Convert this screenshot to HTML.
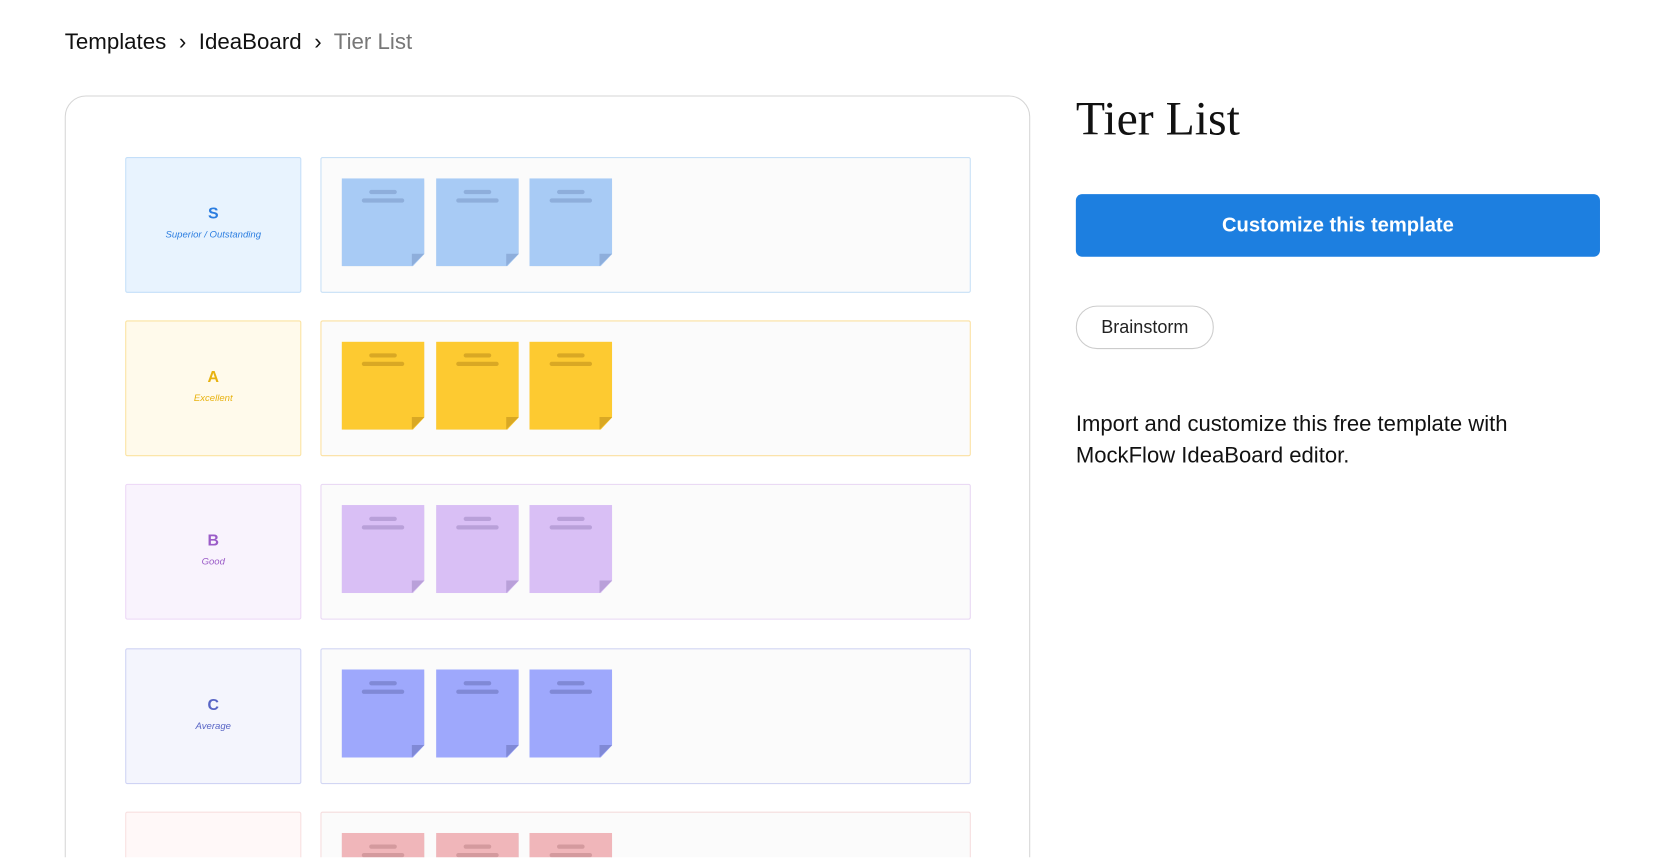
<!DOCTYPE html>
<html><head><meta charset="utf-8"><style>
html,body{margin:0;padding:0;background:#fff;overflow:hidden;width:1664px;height:858px}
#w{position:absolute;left:0;top:0;width:1568px;height:808px;overflow:hidden;transform:scale(1.061);transform-origin:0 0;font-family:"Liberation Sans",sans-serif;color:#111}
.a{position:absolute}
.bc{top:28px;font-size:21px;white-space:nowrap}
.card{left:61px;top:90px;width:908px;height:760px;border:1px solid #d6d6d6;border-radius:20px;overflow:hidden;background:#fff}
.lab{position:absolute;left:56px;width:164px;height:126px;border:1px solid;border-radius:2px;text-align:center}
.lab b{display:block;margin-top:44px;font-size:15px;font-weight:bold}
.lab i{display:block;margin-top:6px;font-size:9px}
.box{position:absolute;left:240px;width:611px;height:126px;border:1px solid;border-radius:2px;background:#fbfbfb}
.n{position:absolute;width:78px;height:83px;box-shadow:1px 3px 4px rgba(0,0,0,.15);clip-path:polygon(0 0,100% 0,100% 86%,86% 100%,0 100%)}
.n:before{content:"";position:absolute;left:26px;top:11px;width:26px;height:4px;border-radius:2px;background:var(--l)}
.n:after{content:"";position:absolute;left:19px;top:19px;width:40px;height:4px;border-radius:2px;background:var(--l)}
.f{position:absolute;left:66px;top:71px;width:12px;height:12px;background:var(--l);clip-path:polygon(100% 0,0 100%,0 0)}
</style></head><body><div id="w">
<div class="a bc" style="left:61px">Templates <span style="margin:0 6px">›</span> IdeaBoard <span style="margin:0 6px">›</span> <span style="color:#777">Tier List</span></div>
<div class="a card">
<div style="position:absolute;left:0;top:57px">
<div class="lab" style="top:0;background:#e8f3fe;border-color:#c4dff9;color:#2b7de0"><b>S</b><i>Superior / Outstanding</i></div>
<div class="box" style="top:0;border-color:#c8e0f6"></div>
<div class="lab" style="top:154px;background:#fffaeb;border-color:#fbe3a0;color:#e8b20f"><b>A</b><i>Excellent</i></div>
<div class="box" style="top:154px;border-color:#fbe0a0"></div>
<div class="lab" style="top:308px;background:#f9f3fd;border-color:#ecd7f6;color:#9b5cc8"><b>B</b><i>Good</i></div>
<div class="box" style="top:308px;border-color:#e8d6f3"></div>
<div class="lab" style="top:463px;background:#f4f5fd;border-color:#cfd3f4;color:#5865c5"><b>C</b><i>Average</i></div>
<div class="box" style="top:463px;border-color:#d2d6f3"></div>
<div class="lab" style="top:617px;background:#fff8f8;border-color:#f8dfe0;color:#d66"><b>D</b><i>Poor</i></div>
<div class="box" style="top:617px;border-color:#f5dcdd"></div>
</div>
<div id="notes"></div>
</div>
<div class="a" style="left:1014px;top:86px;font-family:'Liberation Serif',serif;font-size:45px">Tier List</div>
<div class="a" style="left:1014px;top:183px;width:494px;height:59px;border-radius:6px;background:#1d7fe0;color:#fff;font-weight:bold;font-size:19px;text-align:center;line-height:59px">Customize this template</div>
<div class="a" style="left:1014px;top:288px;width:128px;height:39px;border:1px solid #ccc;border-radius:20px;font-size:17px;text-align:center;line-height:39px;color:#222">Brainstorm</div>
<div class="a" style="left:1014px;top:385px;font-size:20.8px;line-height:30px;color:#111">Import and customize this free template with<br>MockFlow IdeaBoard editor.</div>
</div>
<script>
var rows=[[0,'#a8cbf5','#8eaedb'],[154,'#fdca31','#d9a824'],[308,'#d9bff5','#b9a0d9'],[463,'#9ea8fc','#8089d6'],[617,'#f0b6ba','#d49a9e']];
var h='';rows.forEach(function(r){[260,349,437].forEach(function(x){h+='<div class="n" style="left:'+x+'px;top:'+(57+r[0]+20)+'px;background:'+r[1]+';--l:'+r[2]+'"><div class="f"></div></div>';});});
document.getElementById('notes').outerHTML=h;
</script>
</body></html>
